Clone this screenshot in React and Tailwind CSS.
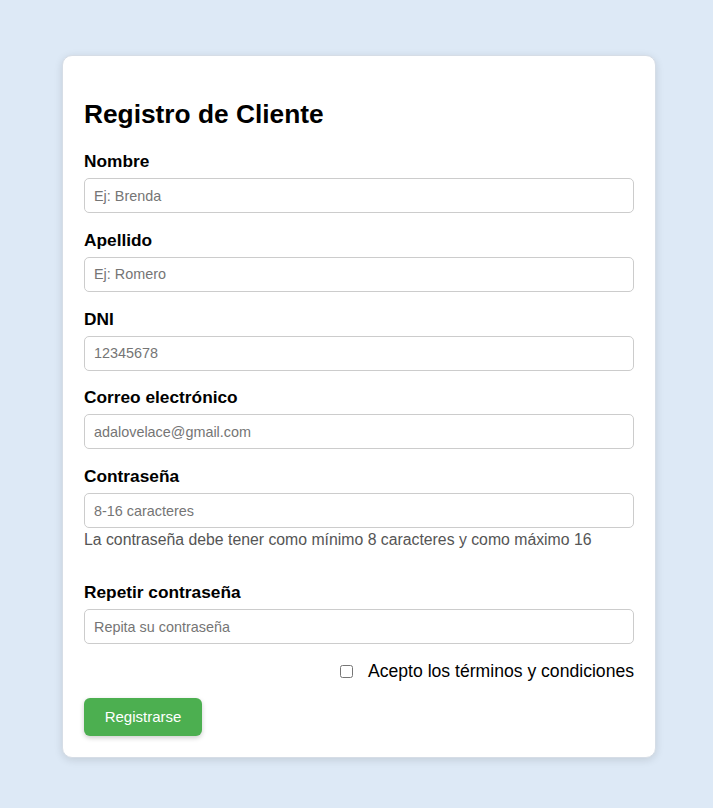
export default function App() {
  const fields = [
    { label: "Nombre", ph: "Ej: Brenda", type: "text" },
    { label: "Apellido", ph: "Ej: Romero", type: "text" },
    { label: "DNI", ph: "12345678", type: "text" },
    { label: "Correo electrónico", ph: "adalovelace@gmail.com", type: "email" },
  ];
  const inputCls =
    "block w-full h-[35px] rounded-[5px] border border-[#cccccc] bg-white px-[9px] text-[14.4px] text-black placeholder:text-[#757575] outline-none";
  const labelCls = "block text-[17.3px] font-bold leading-[18px] text-black mb-[8px]";
  return (
    <div className="min-h-[808px] w-full bg-[#dde9f6] pt-[55px] font-['Liberation_Sans',Arial,sans-serif]">
      <div className="ml-[62px] w-[594px] rounded-[10px] border border-[#d6dde6] bg-white px-[21px] pt-[43px] pb-[21px] shadow-[0_2px_8px_rgba(0,0,0,0.12)]">
        <h2 className="text-[26.3px] font-bold leading-[30px] text-black mb-[23px]">Registro de Cliente</h2>
        {fields.map((f) => (
          <div key={f.label} className="mb-[17.75px]">
            <label className={labelCls}>{f.label}</label>
            <input type={f.type} placeholder={f.ph} className={inputCls} />
          </div>
        ))}
        <div>
          <label className={labelCls}>Contraseña</label>
          <input type="password" placeholder="8-16 caracteres" className={inputCls} />
          <p className="mt-[3px] text-[15.8px] leading-[18px] text-[#555555]">
            La contraseña debe tener como mínimo 8 caracteres y como máximo 16
          </p>
        </div>
        <div className="mt-[34px]">
          <label className={labelCls}>Repetir contraseña</label>
          <input type="password" placeholder="Repita su contraseña" className={inputCls} />
        </div>
        <div className="mt-[17px] flex items-center justify-end">
          <input type="checkbox" className="h-[13px] w-[13px] m-0 accent-[#767676]" />
          <span className="ml-[15px] text-[17.6px] leading-[20px] text-black">Acepto los términos y condiciones</span>
        </div>
        <button className="mt-[17px] h-[38px] w-[118px] rounded-[6px] bg-[#4caf50] text-[15px] text-white shadow-[0_2px_5px_rgba(0,0,0,0.2)]">
          Registrarse
        </button>
      </div>
    </div>
  );
}
